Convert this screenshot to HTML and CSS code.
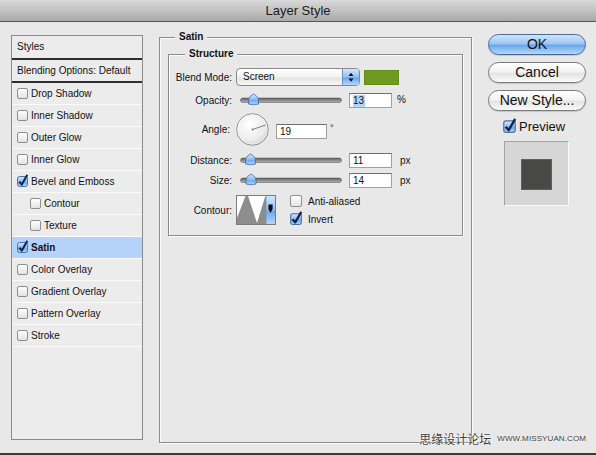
FILE: index.html
```html
<!DOCTYPE html>
<html>
<head>
<meta charset="utf-8">
<title>Layer Style</title>
<link rel="stylesheet" href="styles.css">
</head>
<body>
<svg class="defs" width="0" height="0" aria-hidden="true">
  <defs>
    <linearGradient id="aqua" x1="0" y1="0" x2="0" y2="1">
      <stop offset="0" stop-color="#d4e7fb"/>
      <stop offset="0.5" stop-color="#8fc0f1"/>
      <stop offset="0.55" stop-color="#6aa7ea"/>
      <stop offset="1" stop-color="#b2d8fb"/>
    </linearGradient>
    <linearGradient id="trk" x1="0" y1="0" x2="0" y2="1">
      <stop offset="0" stop-color="#5e5e5e"/>
      <stop offset="1" stop-color="#b4b4b4"/>
    </linearGradient>
    <radialGradient id="dialg" cx="0.4" cy="0.35" r="0.7">
      <stop offset="0" stop-color="#ffffff"/>
      <stop offset="0.7" stop-color="#ececec"/>
      <stop offset="1" stop-color="#cfcfcf"/>
    </radialGradient>
    <g id="chk">
      <rect x="0.5" y="2.5" width="10" height="10" rx="2" fill="url(#aqua)" stroke="#4f72a6"/>
      <path d="M2.3 7.6 L4.8 10.6 L10.4 0.8" fill="none" stroke="#17244d" stroke-width="2.1" stroke-linejoin="round"/>
    </g>
    <g id="thumb">
      <path d="M-5 11 L-5 7 C-5 4 -2 2.2 0 1 C2 2.2 5 4 5 7 L5 11 Q0 12.6 -5 11 Z" fill="url(#aqua)" stroke="#3f69a8" stroke-width="0.8"/>
    </g>
    <g id="track">
      <rect x="0.5" y="5" width="101" height="4.5" rx="2.2" fill="url(#trk)" stroke="#555" stroke-width="0.5"/>
    </g>
  </defs>
</svg>
<div class="window">
  <div class="titlebar">Layer Style</div>
  <div class="content">
    <div class="styles">
      <div class="s-head">Styles</div>
      <div class="s-blend">Blending Options: Default</div>
      <div class="item"><span class="cb"></span>Drop Shadow</div>
      <div class="item"><span class="cb"></span>Inner Shadow</div>
      <div class="item"><span class="cb"></span>Outer Glow</div>
      <div class="item"><span class="cb"></span>Inner Glow</div>
      <div class="item"><svg class="cbx" width="11" height="13" viewBox="0 0 11 13"><use href="#chk"/></svg>Bevel and Emboss</div>
      <div class="item sub"><span class="cb"></span>Contour</div>
      <div class="item sub"><span class="cb"></span>Texture</div>
      <div class="item sel"><svg class="cbx" width="11" height="13" viewBox="0 0 11 13"><use href="#chk"/></svg><b>Satin</b></div>
      <div class="item"><span class="cb"></span>Color Overlay</div>
      <div class="item"><span class="cb"></span>Gradient Overlay</div>
      <div class="item"><span class="cb"></span>Pattern Overlay</div>
      <div class="item"><span class="cb"></span>Stroke</div>
    </div>

    <div class="satin">
      <div class="legend legend-satin">Satin</div>
      <div class="structure">
        <div class="legend legend-struct">Structure</div>

        <div class="row r-blend">
          <span class="lbl">Blend Mode:</span>
          <div class="select">
            <span class="sel-text">Screen</span>
            <span class="sel-arrows">
              <svg width="16" height="16" viewBox="0 0 16 16"><path d="M5.5 7 L10.5 7 L8 3.8 Z M5.5 9.5 L10.5 9.5 L8 12.7 Z" fill="#111"/></svg>
            </span>
          </div>
          <span class="swatch"></span>
        </div>

        <div class="row r-op">
          <span class="lbl">Opacity:</span>
          <svg class="slider" width="102" height="14" viewBox="0 0 102 14"><use href="#track"/><use href="#thumb" x="13.5"/></svg>
          <span class="field"><span class="hl">13</span></span>
          <span class="unit">%</span>
        </div>

        <div class="row r-angle">
          <span class="lbl lbl-angle">Angle:</span>
          <svg class="dial" width="33" height="33" viewBox="0 0 33 33">
            <circle cx="16.5" cy="16.5" r="15.8" fill="url(#dialg)" stroke="#8a8a8a" stroke-width="0.9"/>
            <circle cx="16.5" cy="16.5" r="14.6" fill="none" stroke="#ffffff" stroke-width="0.6" opacity="0.8"/>
            <line x1="16.5" y1="16.5" x2="29.6" y2="12" stroke="#606060" stroke-width="0.8"/>
            <circle cx="16.5" cy="16.5" r="1" fill="#7a7a7a"/>
          </svg>
          <span class="field wide">19</span>
          <span class="deg">°</span>
        </div>

        <div class="row r-dist">
          <span class="lbl">Distance:</span>
          <svg class="slider" width="102" height="14" viewBox="0 0 102 14"><use href="#track"/><use href="#thumb" x="10.5"/></svg>
          <span class="field">11</span>
          <span class="unit px">px</span>
        </div>

        <div class="row r-size">
          <span class="lbl">Size:</span>
          <svg class="slider" width="102" height="14" viewBox="0 0 102 14"><use href="#track"/><use href="#thumb" x="11"/></svg>
          <span class="field">14</span>
          <span class="unit px">px</span>
        </div>

        <div class="row r-cont">
          <span class="lbl">Contour:</span>
          <svg class="contour" width="40" height="30" viewBox="0 0 40 30">
            <rect x="0.5" y="0.5" width="39" height="29" fill="#ffffff" stroke="#7c7c7c"/>
            <path d="M1 29 L1 23 L9.5 1 L12 1 L21 28 L29 2 L30 2 L30 29 Z" fill="#8d8d8d"/>
            <rect x="30" y="1" width="9" height="28" fill="url(#aqua)"/>
            <line x1="30" y1="1" x2="30" y2="29" stroke="#6d8fbf" stroke-width="0.8"/>
            <path d="M32.4 9.5 H36.6 V14 L34.5 18 L32.4 14 Z" fill="#0d0d0d"/>
          </svg>
          <div class="checks">
            <div class="chk-row"><span class="cb big"></span>Anti-aliased</div>
            <div class="chk-row"><svg class="cbx-big" width="12" height="14" viewBox="0 0 11 13"><use href="#chk"/></svg>Invert</div>
          </div>
        </div>
      </div>
    </div>

    <div class="side">
      <div class="btn btn-ok">OK</div>
      <div class="btn">Cancel</div>
      <div class="btn">New Style...</div>
      <div class="preview-row"><svg width="13" height="15" viewBox="0 0 11 13"><use href="#chk"/></svg>Preview</div>
      <div class="preview-box"><div class="preview-sq"></div></div>
    </div>

    <div class="watermark">
      <span class="wm-cn">思缘设计论坛</span>
      <span class="wm-en">WWW.MISSYUAN.COM</span>
    </div>
  </div>
</div>
</body>
</html>
```

FILE: styles.css
```css
* { box-sizing: border-box; }
html, body { margin: 0; padding: 0; }
body {
  width: 596px;
  height: 455px;
  overflow: hidden;
  background: #e8e8e8;
  font-family: "Liberation Sans", Arial, sans-serif;
  font-size: 10px;
  color: #111;
}
.defs { display: block; width: 0; height: 0; overflow: hidden; }

.window {
  width: 596px;
  height: 455px;
  display: flex;
  flex-direction: column;
  border-bottom: 2px solid #3b3b3b;
}
.titlebar {
  flex: none;
  height: 22px;
  background: linear-gradient(#d9d9d9, #c2c2c2 50%, #a9a9a9);
  border-bottom: 1px solid #565656;
  text-align: center;
  font-size: 13px;
  line-height: 21px;
  color: #1a1a1a;
}
.content {
  flex: 1;
  position: relative;
  display: flex;
  align-items: flex-start;
  padding-left: 11px;
}

/* styles list */
.styles {
  flex: none;
  margin-top: 13px;
  width: 132px;
  height: 405px;
  border: 1px solid #8a8a8a;
  background: #ececec;
}
.s-head {
  height: 24px;
  line-height: 22px;
  padding-left: 5px;
  border-bottom: 2px solid #2e2e2e;
}
.s-blend {
  height: 23px;
  line-height: 21px;
  padding-left: 5px;
  border-bottom: 2px solid #2e2e2e;
}
.item {
  height: 22px;
  display: flex;
  align-items: center;
  gap: 3px;
  padding-left: 5px;
  border-bottom: 1px solid #fbfbfb;
}
.item.sub { padding-left: 18px; }
.item.sel { background: #b5d3fa; }
.item b { font-weight: bold; }
.cb {
  flex: none;
  width: 11px;
  height: 11px;
  border: 1px solid #8e8e8e;
  border-radius: 2px;
  background: linear-gradient(#ffffff, #e2e2e2);
}
.cb.big { width: 12px; height: 12px; }
.cbx { flex: none; margin-top: -2px; }

/* satin group */
.satin {
  flex: none;
  margin-left: 16px;
  margin-top: 15px;
  width: 313px;
  height: 406px;
  border: 1px solid #8c8c8c;
  box-shadow: inset 1px 1px 0 #fbfbfb, 1px 1px 0 #fbfbfb;
  display: flex;
  flex-direction: column;
  align-items: flex-start;
}
.legend {
  flex: none;
  margin-top: -7px;
  padding: 0 4px;
  background: #e8e8e8;
  font-weight: bold;
  line-height: 12px;
}
.legend-satin { margin-left: 15px; }
.legend-struct { margin-left: 16px; }
.structure {
  flex: none;
  margin: 11px 0 0 8px;
  width: 295px;
  height: 182px;
  border: 1px solid #8c8c8c;
  box-shadow: inset 1px 1px 0 #fbfbfb, 1px 1px 0 #fbfbfb;
  display: flex;
  flex-direction: column;
  align-items: flex-start;
}
.row { flex: none; display: flex; align-items: center; }
.lbl { flex: none; width: 63px; text-align: right; }
.lbl-angle { padding-right: 2px; }
.r-blend { margin-top: 8px; height: 18px; }
.r-op { margin-top: 6px; height: 16px; }
.r-angle { margin-top: 6px; height: 31px; }
.r-dist { margin-top: 7px; height: 16px; }
.r-size { margin-top: 4px; height: 16px; }
.r-cont { margin-top: 7px; height: 30px; }

.select {
  margin-left: 4px;
  width: 124px;
  height: 18px;
  display: flex;
  border: 1px solid #898989;
  border-radius: 4px;
  overflow: hidden;
  background: linear-gradient(#ffffff, #f2f2f2 50%, #e3e3e3 55%, #f7f7f7);
}
.sel-text { flex: 1; padding-left: 6px; line-height: 16px; }
.sel-arrows {
  width: 17px;
  display: flex;
  align-items: center;
  justify-content: center;
  border-left: 1px solid #6f8fbd;
  background: linear-gradient(#d4e7fb, #8fc0f1 50%, #6aa7ea 55%, #b2d8fb);
}
.swatch {
  margin-left: 4px;
  width: 35px;
  height: 15px;
  background: #6e9a1f;
  border: 1px solid #628b19;
}
.slider { flex: none; margin-left: 8px; }
.field {
  flex: none;
  margin-left: 7px;
  width: 43px;
  height: 15px;
  background: #ffffff;
  border: 1px solid #a0a0a0;
  border-top-color: #6e6e6e;
  padding-left: 3px;
  line-height: 13px;
}
.field.wide { margin-left: 7px; width: 51px; margin-top: 4px; }
.hl { background: #b4d4fd; padding: 0 1px 1px 0; }
.unit { margin-left: 5px; margin-top: -2px; }
.unit.px { margin-left: 8px; margin-top: 0; }
.deg { margin-left: 3px; align-self: flex-start; margin-top: 9px; font-size: 9px; }
.dial { flex: none; margin-left: 4px; }
.contour { flex: none; margin-left: 4px; }
.checks {
  margin-left: 14px;
  display: flex;
  flex-direction: column;
  gap: 6px;
}
.chk-row {
  height: 12px;
  display: flex;
  align-items: center;
  gap: 6px;
}
.cbx-big { flex: none; margin-top: -2px; }

/* side buttons */
.side {
  flex: none;
  margin-left: 16px;
  margin-top: 12px;
  width: 98px;
  display: flex;
  flex-direction: column;
  align-items: flex-start;
}
.btn {
  width: 98px;
  height: 21px;
  border: 1px solid #7a7a7a;
  border-radius: 11px;
  background: linear-gradient(#ffffff, #f4f4f4 45%, #e4e4e4 55%, #fafafa);
  box-shadow: 0 1px 1px rgba(0,0,0,0.15);
  font-size: 14px;
  line-height: 19px;
  text-align: center;
}
.btn + .btn { margin-top: 7px; }
.btn-ok {
  border-color: #4a6a9e;
  background: linear-gradient(#cfe5fc, #9cc7f3 45%, #6aa8ea 55%, #b2d9fc);
}
.preview-row {
  margin: 7px 0 0 15px;
  height: 16px;
  display: flex;
  align-items: center;
  gap: 3px;
  font-size: 13px;
}
.preview-row svg { flex: none; margin-top: -2px; }
.preview-box {
  margin: 7px 0 0 16px;
  width: 65px;
  height: 65px;
  border: 1px solid;
  border-color: #a3a3a3 #fafafa #fafafa #a3a3a3;
  background: #d6d6d6;
  display: flex;
  align-items: center;
  justify-content: center;
}
.preview-sq {
  width: 31px;
  height: 31px;
  margin-top: 2px;
  background: #484944;
  border: 1px solid #5f605b;
}

/* watermark overlay */
.watermark {
  position: absolute;
  right: 10px;
  bottom: 7px;
  display: flex;
  align-items: center;
  gap: 6px;
  color: #3f3f3f;
  line-height: 14px;
}
.wm-cn {
  font-family: "Noto Sans CJK SC", sans-serif;
  font-size: 12px;
  text-shadow: 0 0 2px #ffffff, 0 0 1px #ffffff;
}
.wm-en {
  font-size: 8px;
  letter-spacing: 0.1px;
  text-shadow: 0 0 2px #ffffff;
}
```
